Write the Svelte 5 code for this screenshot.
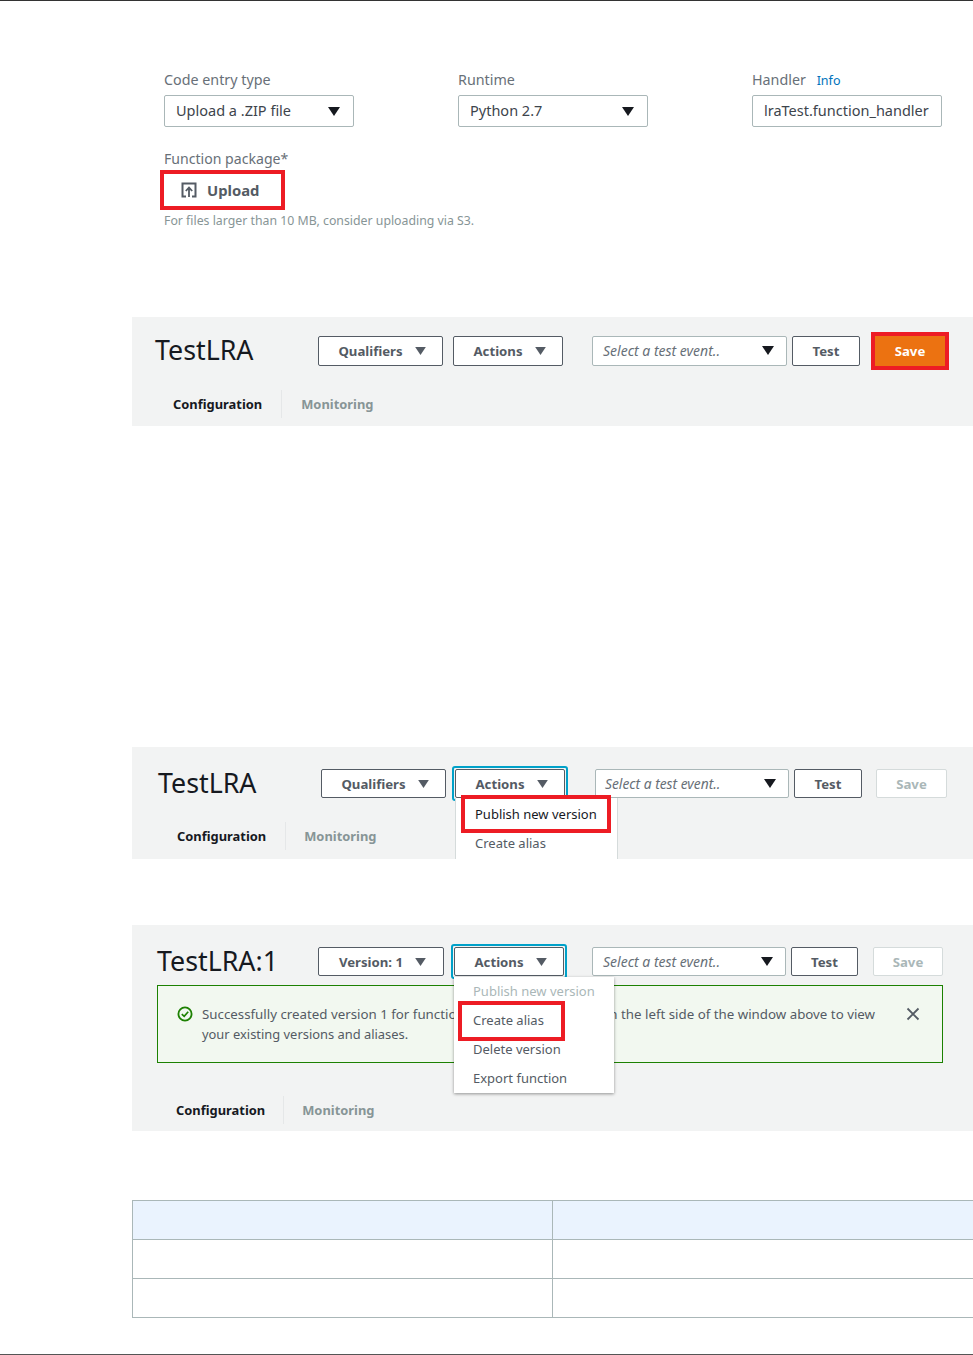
<script>
  const hidden = [0, 1, 2];
</script>

{#snippet caret()}
  <svg class="caret" viewBox="0 0 12 9" aria-hidden="true"><path d="M0 0h12L6 9z" /></svg>
{/snippet}

<div class="page">
  <section class="form">
    <div class="fields">
      <div class="field">
        <div class="label">Code entry type</div>
        <div class="select">Upload a .ZIP file{@render caret()}</div>
      </div>
      <div class="field">
        <div class="label">Runtime</div>
        <div class="select">Python 2.7{@render caret()}</div>
      </div>
      <div class="field">
        <div class="label">Handler <a class="info">Info</a></div>
        <div class="select">lraTest.function_handler</div>
      </div>
    </div>
    <div class="label pkg">Function package*</div>
    <div class="upload red">
      <svg viewBox="0 0 16 16" class="upicon" aria-hidden="true">
        <path d="M5 14.5H1.5v-13h13v13H11" fill="none" stroke="#545b64" stroke-width="2" />
        <path d="M8 15V6M4.8 9 8 5.6 11.2 9" fill="none" stroke="#545b64" stroke-width="1.8" />
      </svg>
      <span>Upload</span>
    </div>
    <div class="help">For files larger than 10 MB, consider uploading via S3.</div>
  </section>

  <section class="bar bar1">
    <div class="row">
      <h1>TestLRA</h1>
      <button class="btn b1">Qualifiers{@render caret()}</button>
      <button class="btn b2">Actions{@render caret()}</button>
      <div class="event">Select a test event..{@render caret()}</div>
      <button class="btn test">Test</button>
      <div class="saveframe red"><button class="btn save primary">Save</button></div>
    </div>
    <div class="tabs">
      <span class="tab on">Configuration</span><span class="tab off">Monitoring</span>
    </div>
  </section>

  <section class="bar bar2">
    <div class="row">
      <h1>TestLRA</h1>
      <button class="btn b1">Qualifiers{@render caret()}</button>
      <div class="ring">
        <button class="btn b2">Actions{@render caret()}</button>
        <div class="menu">
          <div class="item dark redbox">Publish new version</div>
          <div class="item">Create alias</div>
        </div>
      </div>
      <div class="event">Select a test event..{@render caret()}</div>
      <button class="btn test">Test</button>
      <button class="btn save off">Save</button>
    </div>
    <div class="tabs">
      <span class="tab on">Configuration</span><span class="tab off">Monitoring</span>
    </div>
  </section>

  <section class="bar bar3">
    <div class="row">
      <h1>TestLRA:1</h1>
      <button class="btn b1">Version: 1{@render caret()}</button>
      <div class="ring">
        <button class="btn b2">Actions{@render caret()}</button>
        <div class="menu">
          <div class="item muted">Publish new version</div>
          <div class="item redbox">Create alias</div>
          <div class="item">Delete version</div>
          <div class="item">Export function</div>
        </div>
      </div>
      <div class="event">Select a test event..{@render caret()}</div>
      <button class="btn test">Test</button>
      <button class="btn save off">Save</button>
    </div>
    <div class="alert">
      <svg class="ok" viewBox="0 0 16 16" aria-hidden="true">
        <circle cx="8" cy="8" r="6.6" fill="none" stroke="#1d8102" stroke-width="1.8" />
        <path d="M4.8 8.2 7.2 10.4 11.2 5.8" fill="none" stroke="#1d8102" stroke-width="1.7" />
      </svg>
      <div class="msg">
        <div class="line"><span>Successfully created version 1 for function</span><span>on the left side of the window above to view</span></div>
        <div>your existing versions and aliases.</div>
      </div>
      <svg class="close" viewBox="0 0 14 14" aria-hidden="true">
        <path d="M1.5 1.5l11 11M12.5 1.5l-11 11" fill="none" stroke="#545b64" stroke-width="1.8" />
      </svg>
    </div>
    <div class="tabs">
      <span class="tab on">Configuration</span><span class="tab off">Monitoring</span>
    </div>
  </section>

  <div class="table">
    <div class="cell head"></div><div class="cell head"></div>
    {#each hidden.slice(1) as r (r)}
      <div class="cell"></div><div class="cell"></div>
    {/each}
  </div>
</div>

<style>
  :global(body) { margin: 0; background: #fff; }
  .page {
    box-sizing: border-box;
    height: 1355px;
    overflow: hidden;
    border-top: 1px solid #333;
    border-bottom: 1px solid #555;
    font-family: "Noto Sans", "Open Sans", sans-serif;
    font-size: 14px;
    color: #545b64;
  }
  .form { padding: 69px 0 0 164px; height: 316px; box-sizing: border-box; }
  .fields { display: flex; gap: 104px; }
  .field { width: 190px; }
  .label { color: #687078; font-size: 14.3px; line-height: 20px; height: 25px; }
  .info { color: #0073bb; font-size: 12.5px; margin-left: 7px; }
  .select {
    box-sizing: border-box; height: 32px; border: 1px solid #aab7b8; border-radius: 2px;
    padding: 0 11px 2px; display: flex; align-items: center; justify-content: space-between;
    color: #3d444c; font-size: 14.5px; background: #fff;
  }
  .select .caret { margin: 2px 2px 0 0; fill: #16191f; width: 12px; height: 9px; }
  .pkg { margin-top: 22px; height: 21px; font-size: 14.1px; }
  .upload {
    margin-left: -4px; width: 125px; height: 40px; box-sizing: border-box;
    display: flex; align-items: center; gap: 10px; padding-left: 17px;
    font-weight: 700; font-size: 14.8px; color: #545b64;
  }
  .upicon { width: 16px; height: 16px; }
  .red { border: 4px solid #ed1c24; }
  .help { font-size: 12.3px; color: #879596; margin-top: 3px; line-height: 16px; }

  .bar { background: #f2f3f3; margin-left: 132px; position: relative; }
  .bar1 { height: 109px; padding-top: 19px; box-sizing: border-box; }
  .bar2 { height: 112px; margin-top: 321px; padding-top: 22px; box-sizing: border-box; }
  .bar3 { height: 206px; margin-top: 66px; padding-top: 22px; box-sizing: border-box; }
  .row { display: flex; align-items: stretch; height: 30px; }
  .bar2 .row, .bar3 .row { height: 29px; }
  h1 { margin: 0; font-weight: 400; font-size: 26.8px; line-height: 28px; color: #16191f; flex: none; }
  .bar1 h1 { width: 163px; margin-left: 23px; }
  .bar2 h1 { width: 163px; margin-left: 26px; }
  .bar3 h1 { width: 161px; margin-left: 25px; }

  .btn {
    box-sizing: border-box; border: 1px solid #545b64; border-radius: 2px; background: #fff;
    font: 700 13.2px "Noto Sans", "Open Sans", sans-serif; color: #545b64; padding: 0;
    display: flex; align-items: center; justify-content: center; gap: 12px; flex: none;
  }
  .caret { width: 11px; height: 8px; fill: #545b64; flex: none; }
  .b1, .b2 { padding-left: 3px; }
  .b1 { width: 125px; }
  .b2 { width: 110px; margin-left: 10px; }
  .event {
    box-sizing: border-box; width: 195px; margin-left: 29px; border: 1px solid #aab7b8; border-radius: 2px;
    background: #fff; display: flex; align-items: center; justify-content: space-between;
    padding: 0 12px 1px 10px; font-style: italic; font-size: 14px; color: #687078;
  }
  .event .caret { fill: #16191f; width: 12px; height: 9px; }
  .test { width: 68px; margin-left: 5px; }
  .saveframe { margin: -4px 0 0 11px; width: 78px; height: 38px; box-sizing: border-box; }
  .save.primary { width: 70px; height: 30px; background: #ec7211; color: #fff; border: 0; border-radius: 0; }
  .save.off { width: 71px; margin-left: 14px; background: #fff; border-color: #d5dbdb; color: #aab7b8; }

  .ring { position: relative; flex: none; width: 110px; margin-left: 9px; }
  .ring::before {
    content: ""; position: absolute; inset: -3px; border: 2px solid #00a1c9; border-radius: 3px;
  }
  .ring .b2 { margin: 0; width: 110px; height: 100%; position: relative; }
  .bar2 .event { width: 194px; margin-left: 30px; font-size: 13.8px; padding-left: 9px; }
  .bar3 .b1 { width: 126px; }
  .bar3 .ring { margin-left: 10px; }
  .bar3 .event { width: 194px; margin-left: 28px; }
  .bar3 .test { width: 67px; }
  .bar3 .save.off { width: 70px; margin-left: 15px; }

  .menu {
    position: absolute; left: 0; top: 29px; z-index: 2; background: #fff; box-sizing: border-box;
    font-size: 13px; color: #545b64;
  }
  .bar2 .menu { width: 163px; height: 61px; border-left: 1px solid #d5dbdb; border-right: 1px solid #d5dbdb; overflow: visible; padding-top: 2px; }
  .bar3 .menu { width: 160px; top: 30px; box-shadow: 0 1px 3px rgba(0,0,0,.4); padding: 0 0 0 19px; height: 116px; }
  .item { height: 29px; line-height: 29px; white-space: nowrap; position: relative; }
  .bar2 .item { padding-left: 19px; }
  .dark { color: #16191f; }
  .muted { color: #aab7b8; }
  .redbox::after { content: ""; position: absolute; border: 4px solid #ed1c24; }
  .bar2 .redbox::after { left: 5px; top: -5px; width: 142px; height: 30px; }
  .bar3 .redbox::after { left: -15px; top: -5px; width: 99px; height: 32px; }

  .alert {
    box-sizing: border-box; position: absolute; left: 25px; width: 786px; top: 60px; height: 78px;
    border: 1px solid #1d8102; background: #f2f8f0; display: flex;
    font-size: 12.9px; line-height: 20px; color: #545b64;
  }
  .ok { width: 16px; height: 16px; margin: 20px 0 0 19px; flex: none; }
  .msg { margin: 18px 0 0 9px; width: 673px; flex: none; }
  .line { display: flex; justify-content: space-between; white-space: nowrap; font-size: 13.3px; }
  .close { width: 14px; height: 14px; margin: 21px 0 0 31px; flex: none; }

  .tabs { display: flex; align-items: center; font-weight: 700; font-size: 12.9px; }
  .tab { height: 28px; line-height: 28px; }
  .tab.on { color: #16191f; padding-right: 19px; border-right: 1px solid #e5e7e8; }
  .tab.off { color: #879596; padding-left: 19px; }
  .bar2 .tab.off { padding-left: 18px; }
  .bar3 .tab.on { padding-right: 18px; }
  .bar3 .tab.off { padding-left: 18px; }
  .bar1 .tabs { margin: 24px 0 0 41px; }
  .bar2 .tabs { margin: 24px 0 0 45px; }
  .bar3 .tabs { margin: 120px 0 0 44px; }

  .table {
    margin: 69px 0 0 132px; display: grid; grid-template-columns: 420px 421px;
    border-left: 1px solid #aab7b8; border-top: 1px solid #aab7b8;
  }
  .cell { height: 38px; border-bottom: 1px solid #aab7b8; }
  .cell:nth-child(odd) { border-right: 1px solid #aab7b8; }
  .head { background: #eaf3fe; }
</style>
